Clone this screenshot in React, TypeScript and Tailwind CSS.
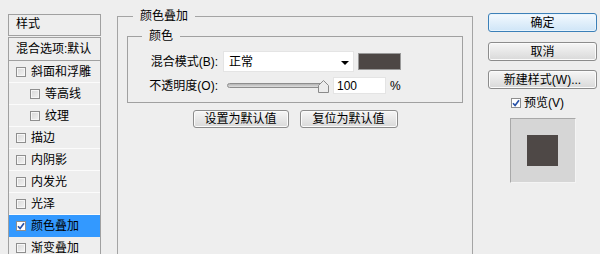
import React from "react";

function Box({ checked }: { checked?: boolean }) {
  return (
    <span
      className={
        "flex h-[10px] w-[10px] shrink-0 items-center justify-center border border-[#8e8e8e] " +
        (checked ? "bg-white" : "bg-linear-to-br from-[#d8d8d8] to-[#f4f4f4] shadow-[inset_0_0_0_1px_#f7f7f7]")
      }
    >
      {checked && (
        <svg width="8" height="8" viewBox="0 0 8 8">
          <path d="M1 4.2 L3.1 6.5 L7 1.3" fill="none" stroke="#2852a8" strokeWidth="1.7" />
        </svg>
      )}
    </span>
  );
}

function Row({
  label,
  nested,
  checked,
  selected,
}: {
  label: string;
  nested?: boolean;
  checked?: boolean;
  selected?: boolean;
}) {
  return (
    <div
      className={
        "flex h-[22px] shrink-0 items-center gap-[5px] border-b " +
        (selected ? "bg-[#3399ff] border-[#3399ff] " : "border-[#fbfbfb] ") +
        (nested ? "pl-[21px]" : "pl-[7px]")
      }
    >
      <Box checked={checked} />
      <span className="leading-[14px] text-black">{label}</span>
    </div>
  );
}

function GrayButton({ children, w, primary }: { children: React.ReactNode; w?: string; primary?: boolean }) {
  return (
    <div
      className={
        "flex items-center justify-center rounded-[3px] border leading-[14px] text-black " +
        (primary
          ? "border-[#3c80b8] bg-linear-to-b from-[#f3f9fe] to-[#cfe5f7] shadow-[inset_0_0_0_1px_#e8f4fd]"
          : "border-[#8c8c8c] bg-linear-to-b from-[#f6f6f6] to-[#d9d9d9] shadow-[inset_0_0_0_1px_#fbfbfb]") +
        " " +
        (w ?? "")
      }
    >
      {children}
    </div>
  );
}

export default function App() {
  return (
    <div className="flex h-[254px] w-[600px] items-start overflow-hidden bg-[#eeeeee] font-[family-name:'Liberation_Sans','Noto_Sans_CJK_SC',sans-serif] text-[12px] text-black">
      {/* Left list */}
      <div className="ml-[8px] mt-[14px] flex w-[93px] shrink-0 flex-col">
        <div className="flex h-[22px] items-center border border-[#a0a0a0] pb-[2px] pl-[7px] leading-[14px]">样式</div>
        <div className="mt-[1px] flex h-[230px] flex-col border-x border-t border-[#a0a0a0]">
          <div className="flex h-[23px] shrink-0 items-center border-b border-[#a0a0a0] pl-[7px] leading-[14px]">
            混合选项:默认
          </div>
          <Row label="斜面和浮雕" />
          <Row label="等高线" nested />
          <Row label="纹理" nested />
          <Row label="描边" />
          <Row label="内阴影" />
          <Row label="内发光" />
          <Row label="光泽" />
          <Row label="颜色叠加" checked selected />
          <Row label="渐变叠加" />
        </div>
      </div>

      {/* Middle */}
      <fieldset className="ml-[16px] mt-[8px] h-[300px] w-[356px] shrink-0 border border-[#a4a4a4]">
        <legend className="ml-[15px] px-[7px] leading-[16px]">颜色叠加</legend>
        <fieldset className="ml-[9px] mt-[4px] w-[336px] border border-[#a0a0a0] pb-[8px] pt-[7px]">
          <legend className="ml-[14px] px-[7px] leading-[16px]">颜色</legend>
          <div className="flex h-[21px] items-center">
            <span className="w-[90px] text-right leading-[14px]">混合模式(B):</span>
            <div className="relative ml-[5px] flex h-[21px] w-[131px] items-center border border-[#e4e4e4] bg-white pl-[5px] leading-[14px]">
              正常
              <svg className="absolute right-[4px] top-[9px]" width="8" height="4" viewBox="0 0 8 4">
                <path d="M0 0 H8 L4 4 Z" fill="#000" />
              </svg>
            </div>
            <div className="ml-[4px] h-[17px] w-[43px] border border-[#9a9a9a] bg-[#4d4745]" />
          </div>
          <div className="mt-[5px] flex h-[17px] items-center">
            <span className="w-[90px] text-right leading-[14px]">不透明度(O):</span>
            <div className="relative ml-[9px] flex h-[17px] w-[102px] items-center">
              <div className="h-[5px] w-[98px] rounded-full border border-[#8d8d8d] bg-linear-to-b from-[#b4b4b4] to-[#dedede]" />
              <svg className="absolute left-[91px] top-[3px]" width="11" height="13" viewBox="0 0 11 13">
                <path d="M5.5 0.5 L10.5 5.5 V12.5 H0.5 V5.5 Z" fill="#ececec" stroke="#8a8a8a" />
              </svg>
            </div>
            <div className="ml-[4px] flex h-[17px] w-[53px] items-center border border-[#e4e4e4] bg-white pl-[3px] leading-[14px]">
              100
            </div>
            <span className="ml-[4px] leading-[14px]">%</span>
          </div>
        </fieldset>
        <div className="ml-[9px] mt-[7px] flex w-[336px] justify-center gap-[11px]">
          <GrayButton w="h-[18px] w-[96px]">设置为默认值</GrayButton>
          <GrayButton w="h-[18px] w-[98px]">复位为默认值</GrayButton>
        </div>
      </fieldset>

      {/* Right */}
      <div className="ml-[15px] mt-[13px] flex w-[109px] shrink-0 flex-col">
        <GrayButton primary w="h-[19px]">确定</GrayButton>
        <div className="mt-[10px]">
          <GrayButton w="h-[19px]">取消</GrayButton>
        </div>
        <div className="mt-[9px]">
          <GrayButton w="h-[19px]">新建样式(W)...</GrayButton>
        </div>
        <div className="ml-[23px] mt-[7px] flex h-[14px] items-center gap-[3px]">
          <Box checked />
          <span className="leading-[14px]">预览(V)</span>
        </div>
        <div className="mx-auto mt-[8px] flex h-[65px] w-[66px] items-center justify-center border border-b-[#f4f4f4] border-l-[#a8a8a8] border-r-[#f4f4f4] border-t-[#a8a8a8] bg-[#d6d6d6]">
          <div className="h-[31px] w-[31px] bg-[#4e4846]" />
        </div>
      </div>
    </div>
  );
}
